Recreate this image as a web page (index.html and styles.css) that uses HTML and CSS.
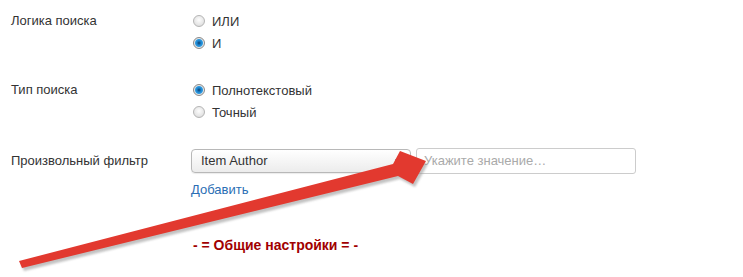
FILE: index.html
```html
<!DOCTYPE html>
<html lang="ru">
<head>
  <meta charset="UTF-8">
  <link rel="stylesheet" href="styles.css">
  <title>Настройки поиска</title>
</head>
<body>
  <div class="form">
    <div class="row">
      <div class="label">Логика поиска</div>
      <div class="controls">
        <label class="radio"><input type="radio" name="logic"> ИЛИ</label>
        <label class="radio"><input type="radio" name="logic" checked> И</label>
      </div>
    </div>

    <div class="row">
      <div class="label">Тип поиска</div>
      <div class="controls">
        <label class="radio"><input type="radio" name="type" checked> Полнотекстовый</label>
        <label class="radio"><input type="radio" name="type"> Точный</label>
      </div>
    </div>

    <div class="row filter-row">
      <div class="label">Произвольный фильтр</div>
      <div class="controls">
        <div class="filter">
          <div class="select">Item Author<span class="caret"></span></div>
          <div class="input">Укажите значение…</div>
        </div>
        <a class="add" href="#">Добавить</a>
      </div>
    </div>

    <div class="section-title">- = Общие настройки = -</div>
  </div>

  <svg class="arrow" width="743" height="277" viewBox="0 0 743 277">
    <defs>
      <filter id="sh" x="-10%" y="-30%" width="120%" height="160%">
        <feGaussianBlur stdDeviation="1.2"/>
      </filter>
    </defs>
    <g transform="translate(2,3)" fill="#9a9a9a" opacity="0.6" filter="url(#sh)">
      <path d="M19 261 L393 164 L400 151 L426 161 L413 184 L398 176 L22 268 Z"/>
    </g>
    <path d="M19 261 L393 164 L400 151 L426 161 L413 184 L398 176 L22 268 Z" fill="#e2392f"/>
  </svg>
</body>
</html>
```

FILE: styles.css
```css
* {
  margin: 0;
  padding: 0;
  box-sizing: border-box;
}

body {
  background-color: #fff;
  font-family: "Liberation Sans", Arial, sans-serif;
  font-size: 13px;
  color: #333;
}

.form {
  padding: 10px 0 0 11px;
}

.row {
  display: grid;
  grid-template-columns: 180px 1fr;
  margin-bottom: 25px;
}

.label {
  line-height: 22px;
}

.controls {
  display: flex;
  flex-direction: column;
}

.radio {
  display: flex;
  align-items: center;
  gap: 7px;
  height: 22px;
  padding-left: 2px;
}

.radio input {
  appearance: none;
  width: 12px;
  height: 12px;
  border-radius: 50%;
  border: 1px solid #b5b5b5;
  background: radial-gradient(circle at 50% 40%, #fdfdfd 0%, #e6e6e6 60%, #d2d2d2 100%);
}

.radio input:checked {
  border-color: #8a8a8a;
  background: radial-gradient(circle at 50% 50%, #0c3c6a 0px, #1a7fc8 2px, #2e9ae0 3.5px, #e8e8e8 4.5px, #d6d6d6 6px);
}

.filter-row {
  margin-bottom: 0;
}

.filter-row .label {
  line-height: 26px;
}

.filter {
  display: flex;
  align-items: center;
  gap: 5px;
  height: 26px;
}

.select {
  position: relative;
  width: 220px;
  height: 24px;
  line-height: 22px;
  padding-left: 9px;
  border: 1px solid #b8b8b8;
  border-radius: 4px;
  background: linear-gradient(#ffffff, #ececec);
  box-shadow: 0 1px 1px rgba(0, 0, 0, 0.08);
  font-size: 13px;
  color: #333;
}

.caret {
  position: absolute;
  right: 7px;
  top: 9px;
  border-left: 4px solid transparent;
  border-right: 4px solid transparent;
  border-top: 5px solid #777;
}

.input {
  width: 220px;
  height: 26px;
  line-height: 24px;
  padding-left: 7px;
  border: 1px solid #ccc;
  border-radius: 3px;
  color: #aaa;
  font-size: 13px;
}

.add {
  margin-top: 5px;
  line-height: 22px;
  color: #2a6eb4;
  text-decoration: none;
  font-size: 13px;
}

.section-title {
  margin: 36px 0 0 182px;
  font-weight: bold;
  color: #a10000;
  font-size: 14px;
}

.arrow {
  position: absolute;
  top: 0;
  left: 0;
}
```
